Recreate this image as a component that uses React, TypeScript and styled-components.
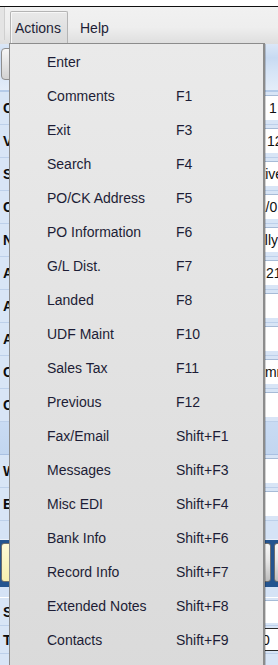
import styled, { createGlobalStyle } from 'styled-components';

const GlobalStyle = createGlobalStyle`
	html, body {
		margin: 0;
		padding: 0;
		overflow: hidden;
		background: #ffffff;
	}
	body {
		font-family: 'Liberation Sans', Arial, sans-serif;
		font-size: 14px;
	}
`;

type MenuEntry = { label: string; shortcut?: string };

const MENU_ENTRIES: MenuEntry[] = [
	{ label: 'Enter' },
	{ label: 'Comments', shortcut: 'F1' },
	{ label: 'Exit', shortcut: 'F3' },
	{ label: 'Search', shortcut: 'F4' },
	{ label: 'PO/CK Address', shortcut: 'F5' },
	{ label: 'PO Information', shortcut: 'F6' },
	{ label: 'G/L Dist.', shortcut: 'F7' },
	{ label: 'Landed', shortcut: 'F8' },
	{ label: 'UDF Maint', shortcut: 'F10' },
	{ label: 'Sales Tax', shortcut: 'F11' },
	{ label: 'Previous', shortcut: 'F12' },
	{ label: 'Fax/Email', shortcut: 'Shift+F1' },
	{ label: 'Messages', shortcut: 'Shift+F3' },
	{ label: 'Misc EDI', shortcut: 'Shift+F4' },
	{ label: 'Bank Info', shortcut: 'Shift+F6' },
	{ label: 'Record Info', shortcut: 'Shift+F7' },
	{ label: 'Extended Notes', shortcut: 'Shift+F8' },
	{ label: 'Contacts', shortcut: 'Shift+F9' },
];

type FieldRow = { label: string; value?: string; indent?: number; boxed?: boolean };

// header fields of the vendor form behind the open menu
const TOP_FIELDS: FieldRow[] = [
	{ label: 'Check No', value: '1', indent: 14 },
	{ label: 'Vendor', value: '1234', indent: 12 },
	{ label: 'Status', value: 'Active', indent: -10 },
	{ label: 'Check Date', value: '01/01/2024', indent: -5 },
	{ label: 'Name', value: 'Manually', indent: -33 },
	{ label: 'Address 1', value: '2150 Main St', indent: 11 },
	{ label: 'Address 2' },
	{ label: 'Address 3' },
	{ label: 'City', value: 'Commission', indent: -8 },
	{ label: 'Country' },
];

const MID_FIELDS: FieldRow[] = [{ label: 'Website' }, { label: 'Email' }];

const BOTTOM_FIELDS: FieldRow[] = [
	{ label: 'Sales Tax' },
	{ label: 'Total', value: '0', indent: 7, boxed: true },
];

const Field = ({ row, compact = false }: { row: FieldRow; compact?: boolean }) => (
	<FormRow compact={compact}>
		<FieldLabel>{row.label}</FieldLabel>
		<FieldInput boxed={!!row.boxed}>
			<FieldText style={{ textIndent: row.indent ?? 0 }}>{row.value ?? ''}</FieldText>
		</FieldInput>
	</FormRow>
);

const App = () => (
	<Screen>
		<GlobalStyle />
		<TitleGap />
		<MenuBar>
			<Grip />
			<MenuBarItem active>Actions</MenuBarItem>
			<MenuBarItem active={false}>Help</MenuBarItem>
		</MenuBar>
		<Toolbar>
			<ToolButton />
		</Toolbar>
		<Form>
			{TOP_FIELDS.map((row) => (
				<Field key={row.label} row={row} />
			))}
			<SectionBand />
			{MID_FIELDS.map((row) => (
				<Field key={row.label} row={row} />
			))}
			<SectionGap />
			<ButtonStrip>
				<StripButton tone="yellow" />
				<StripButton tone="gray" />
				<StripButton tone="gray" />
				<StripButton tone="gray" />
			</ButtonStrip>
			<SectionGap small />
			{BOTTOM_FIELDS.map((row) => (
				<Field key={row.label} row={row} compact />
			))}
		</Form>

		<DropMenu>
			{MENU_ENTRIES.map((entry) => (
				<MenuItem key={entry.label}>
					<ItemLabel>{entry.label}</ItemLabel>
					<ItemShortcut>{entry.shortcut ?? ''}</ItemShortcut>
				</MenuItem>
			))}
		</DropMenu>
	</Screen>
);

const Screen = styled.div`
	position: relative;
	width: 278px;
	height: 665px;
	overflow: hidden;
	background: #d8e5f6;
`;

const TitleGap = styled.div`
	height: 6px;
	background: #ffffff;
	border-bottom: 1px solid #101010;
`;

const MenuBar = styled.div`
	display: flex;
	align-items: flex-start;
	height: 37px;
	box-sizing: border-box;
	padding-top: 4px;
	background: linear-gradient(#f1f1f1 0%, #eeeeee 55%, #dedede 100%);
	color: #1e1e36;
`;

const Grip = styled.div`
	width: 4px;
	height: 33px;
	margin-top: -4px;
	margin-right: 5px;
	border-right: 1px solid #cfcfcf;
	background: #e4e4e4;
`;

const MenuBarItem = styled.div<{ active: boolean }>`
	display: flex;
	align-items: center;
	height: 32px;
	box-sizing: border-box;
	padding-left: ${(props) => (props.active ? '4px' : '11px')};
	width: ${(props) => (props.active ? '58px' : 'auto')};
	border: 1px solid ${(props) => (props.active ? '#b4b4b4' : 'transparent')};
	border-bottom: none;
	border-radius: 2px 2px 0 0;
	background: ${(props) =>
		props.active ? 'linear-gradient(#e9e9e9, #d9d9d9)' : 'transparent'};
	box-shadow: ${(props) => (props.active ? 'inset 1px 1px 0 #f7f7f7' : 'none')};
	font-size: 14px;
`;

const Toolbar = styled.div`
	height: 48px;
	box-sizing: border-box;
	padding: 4px 0 0 1px;
	background: linear-gradient(#dbe7f7 0%, #c8daf2 30%, #d6e4f6 60%, #e4edf9 100%);
	border-bottom: 2px solid #b5cbe9;
`;

const ToolButton = styled.div`
	width: 80px;
	height: 32px;
	box-sizing: border-box;
	border: 1px solid #8f8f8f;
	border-radius: 4px;
	background: linear-gradient(#f6f6f6, #d2d2d2);
`;

const Form = styled.div`
	display: flex;
	flex-direction: column;
`;

const FormRow = styled.div<{ compact: boolean }>`
	display: grid;
	grid-template-columns: 250px 1fr;
	align-items: center;
	height: ${(props) => (props.compact ? '28px' : '33px')};
	box-sizing: border-box;
	padding: ${(props) => (props.compact ? '2px 0 2px' : '3px 0 4px')};
	border-bottom: 1px solid #bdd0ea;
`;

const FieldLabel = styled.div`
	padding-left: 3px;
	font-weight: bold;
	font-size: 14px;
	color: #0c0c0c;
	white-space: nowrap;
`;

const FieldInput = styled.div<{ boxed: boolean }>`
	height: 100%;
	box-sizing: border-box;
	display: flex;
	align-items: center;
	padding-left: 4px;
	overflow: hidden;
	background: #ffffff;
	border-top: 1px solid ${(props) => (props.boxed ? '#2b2b2b' : '#a7bbd6')};
	border-left: 1px solid ${(props) => (props.boxed ? '#2b2b2b' : '#a7bbd6')};
	border-bottom: 1px solid ${(props) => (props.boxed ? '#2b2b2b' : 'transparent')};
`;

const FieldText = styled.div`
	white-space: nowrap;
	font-size: 14px;
	color: #111111;
`;

const SectionBand = styled.div`
	height: 32px;
	background: linear-gradient(#c9dbf3, #c2d6f0);
	border-bottom: 1px solid #a9c0e2;
`;

const SectionGap = styled.div<{ small?: boolean }>`
	height: ${(props) => (props.small ? '10px' : '18px')};
	background: #d5e3f6;
	border-bottom: 1px solid ${(props) => (props.small ? '#ffffff' : '#e9f0fa')};
`;

const ButtonStrip = styled.div`
	display: flex;
	gap: 3px;
	height: 47px;
	box-sizing: border-box;
	padding: 3px 0 5px 1px;
	background: #24548f;
`;

const StripButton = styled.div<{ tone: 'yellow' | 'gray' }>`
	flex: 0 0 88px;
	box-sizing: border-box;
	border: 1px solid #6e6e6e;
	border-radius: 3px;
	background: ${(props) =>
		props.tone === 'yellow'
			? 'linear-gradient(#fdf9d6, #f7efb0)'
			: 'linear-gradient(#f7f7f7, #e6e6e6 45%, #bdbdbd)'};
`;

const DropMenu = styled.div`
	position: absolute;
	top: 43px;
	left: 9px;
	bottom: -20px;
	width: 256px;
	box-sizing: border-box;
	padding-top: 1px;
	border: 1px solid #8c8c8c;
	border-right-width: 2px;
	background: linear-gradient(#eaeaea 0%, #e2e2e2 50%, #dadada 100%);
	box-shadow: 1px 1px 0 rgba(0, 0, 0, 0.18);
`;

const MenuItem = styled.div`
	display: grid;
	grid-template-columns: 129px 1fr;
	align-items: center;
	height: 34px;
	padding-left: 37px;
	font-size: 14px;
	color: #1d1d36;
	white-space: nowrap;
`;

const ItemLabel = styled.span``;

const ItemShortcut = styled.span``;

export default App;
